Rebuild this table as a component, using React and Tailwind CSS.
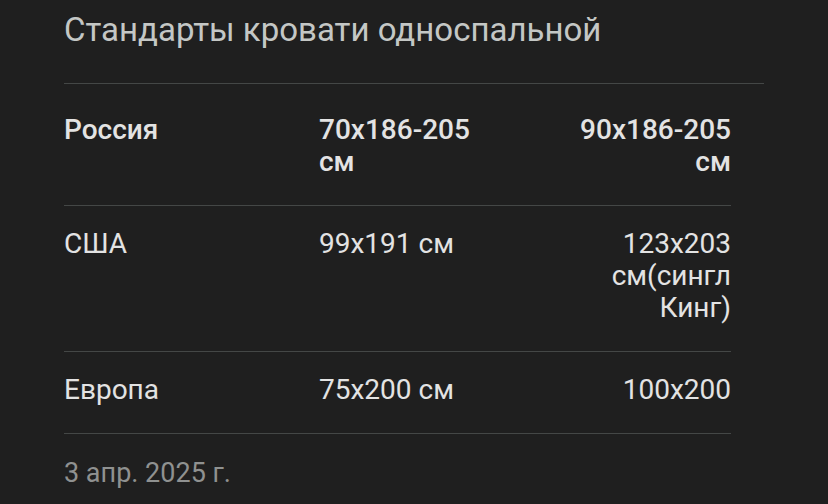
export default function App() {
  const rows = [
    { country: "Россия", a: "70x186-205 см", b: "90x186-205 см", head: true },
    { country: "США", a: "99x191 см", b: "123x203 см(сингл Кинг)" },
    { country: "Европа", a: "75x200 см", b: "100x200" },
  ];

  return (
    <div
      className="min-h-screen w-[828px] h-[504px] overflow-hidden bg-[#1f1f1f]"
      style={{ fontFamily: "Roboto, 'Noto Sans', sans-serif" }}
    >
      <div className="pl-[64px] pr-[64px]">
        {/* Title */}
        <h1 className="pt-[9px] h-[83px] text-[33px] leading-[42px] text-[#c4c7c5] font-normal">
          Стандарты кровати односпальной
        </h1>
        <div className="h-px bg-[#444746]" />

        {/* Table */}
        <div className="mt-[8px] w-[667px]">
          {rows.map((r) => (
            <div
              key={r.country}
              className={`grid grid-cols-[255px_186px_1fr] pt-[22px] pb-[27px] border-b border-[#444746] text-[28px] leading-[32px] text-[#e3e3e3] ${
                r.head ? "font-medium" : "font-normal"
              }`}
            >
              <div>{r.country}</div>
              <div>{r.a}</div>
              <div className="ml-auto max-w-[180px] text-right">{r.b}</div>
            </div>
          ))}
        </div>

        {/* Date */}
        <div className="pt-[23px] text-[27px] leading-[32px] text-[#8f9190]">
          3 апр. 2025 г.
        </div>
      </div>
    </div>
  );
}
